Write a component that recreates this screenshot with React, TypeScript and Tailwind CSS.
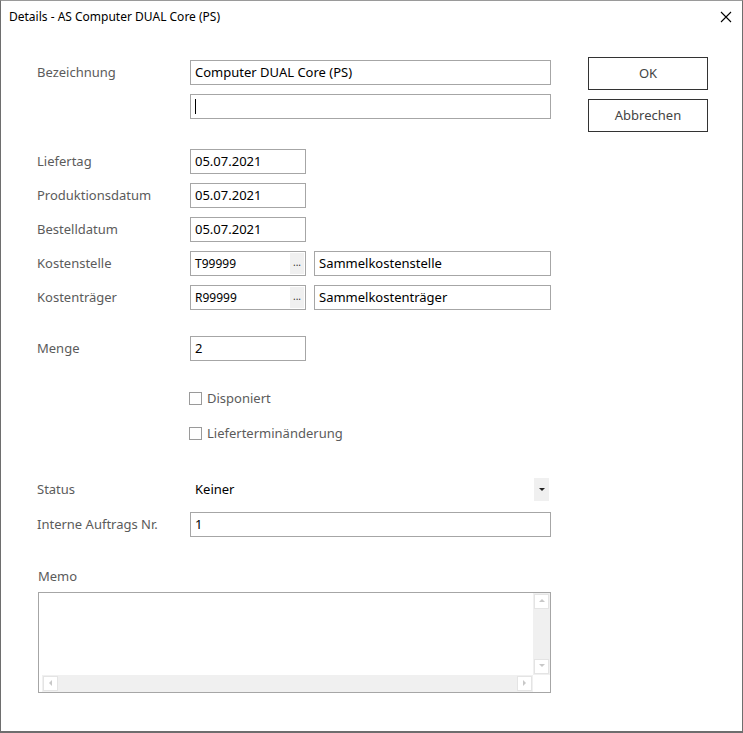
import type { ReactNode } from 'react';

const font = { fontFamily: '"Noto Sans", "Open Sans", sans-serif' };

function Label({ children }: { children: ReactNode }) {
  return <div className="w-[153px] shrink-0 text-[13px] text-[#5b5b5b]">{children}</div>;
}

function Field({ value, width, cursor }: { value?: string; width: string; cursor?: boolean }) {
  return (
    <div className={`${width} h-[25px] border border-[#a6a6a6] bg-white flex items-center pl-[4px] text-[13px] text-black`}>
      {value}
      {cursor && <span className="inline-block w-px h-[15px] bg-black" />}
    </div>
  );
}

function LookupField({ value }: { value: string }) {
  return (
    <div className="w-[116px] h-[25px] border border-[#a6a6a6] bg-white flex items-center pl-[4px] text-[12px] text-black">
      <span className="flex-1">{value}</span>
      <span className="w-[14px] h-[21px] mr-px bg-[#f0f0f0] flex items-center justify-center text-[10px] leading-none text-[#333] pb-[4px]">...</span>
    </div>
  );
}

function Checkbox({ label }: { label: string }) {
  return (
    <div className="flex items-center gap-[5px] text-[13px] text-[#5b5b5b]">
      <span className="w-[13px] h-[13px] border border-[#9a9a9a] bg-white" />
      {label}
    </div>
  );
}

function Arrow({ dir }: { dir: 'up' | 'down' | 'left' | 'right' }) {
  const pts = {
    up: '1,5 4,2 7,5',
    down: '1,2 4,5 7,2',
    left: '5,1 2,4 5,7',
    right: '2,1 5,4 2,7',
  }[dir];
  return (
    <span className="w-[15px] h-[15px] bg-white border border-[#e4e4e4] flex items-center justify-center">
      <svg width="8" height="8" viewBox="0 0 8 8">
        <polygon points={pts} fill="#c8c8c8" />
      </svg>
    </span>
  );
}

export default function App() {
  return (
    <div
      className="w-[743px] h-[733px] bg-white border-x border-t border-b-2 border-[#6e6e6e] border-t-[#9a9a9a] flex flex-col"
      style={font}
    >
      {/* Title bar */}
      <div className="h-[31px] flex items-center justify-between pl-[8px] pr-[9px] text-[12px] text-black">
        <span>Details - AS Computer DUAL Core (PS)</span>
        <svg width="12" height="12" viewBox="0 0 12 12" className="mr-[1px]">
          <path d="M1 1L11 11M11 1L1 11" stroke="#000" strokeWidth="1.1" />
        </svg>
      </div>

      <div className="flex pl-[36px]">
        {/* Form */}
        <div className="w-[515px] flex flex-col">
          <div className="flex mt-[28px]">
            <div className="w-[153px] shrink-0 h-[25px] flex items-center text-[13px] text-[#5b5b5b]">Bezeichnung</div>
            <div className="flex flex-col gap-[9px]">
              <Field value="Computer DUAL Core (PS)" width="w-[361px]" />
              <Field width="w-[361px]" cursor />
            </div>
          </div>

          <div className="flex flex-col gap-[9px] mt-[30px]">
            <div className="flex items-center"><Label>Liefertag</Label><Field value="05.07.2021" width="w-[116px]" /></div>
            <div className="flex items-center"><Label>Produktionsdatum</Label><Field value="05.07.2021" width="w-[116px]" /></div>
            <div className="flex items-center"><Label>Bestelldatum</Label><Field value="05.07.2021" width="w-[116px]" /></div>
            <div className="flex items-center">
              <Label>Kostenstelle</Label>
              <LookupField value="T99999" />
              <div className="ml-[8px]"><Field value="Sammelkostenstelle" width="w-[237px]" /></div>
            </div>
            <div className="flex items-center">
              <Label>Kostenträger</Label>
              <LookupField value="R99999" />
              <div className="ml-[8px]"><Field value="Sammelkostenträger" width="w-[237px]" /></div>
            </div>
          </div>

          <div className="flex items-center mt-[26px]"><Label>Menge</Label><Field value="2" width="w-[116px]" /></div>

          <div className="flex flex-col gap-[18px] mt-[29px] pl-[152px]">
            <div className="h-[17px] flex items-center"><Checkbox label="Disponiert" /></div>
            <div className="h-[17px] flex items-center"><Checkbox label="Lieferterminänderung" /></div>
          </div>

          <div className="flex items-center mt-[36px] h-[23px]">
            <Label>Status</Label>
            <div className="w-[359px] flex items-center justify-between pl-[5px] text-[13px] text-black">
              <span>Keiner</span>
              <span className="w-[15px] h-[23px] bg-[#f0f0f0] flex items-center justify-center">
                <svg width="6" height="4" viewBox="0 0 6 4"><polygon points="0,0 6,0 3,3" fill="#222" /></svg>
              </span>
            </div>
          </div>

          <div className="flex items-center mt-[11px]"><Label>Interne Auftrags Nr.</Label><Field value="1" width="w-[361px]" /></div>

          <div className="mt-[30px] text-[13px] text-[#5b5b5b] ml-px">Memo</div>

          <div className="mt-[5px] ml-px w-[513px] h-[101px] border border-[#a6a6a6] bg-white flex flex-col">
            <div className="flex flex-1">
              <div className="flex-1" />
              <div className="w-[17px] bg-[#f0f0f0] flex flex-col justify-between items-center pt-px pb-px">
                <Arrow dir="up" />
                <Arrow dir="down" />
              </div>
            </div>
            <div className="flex h-[17px]">
              <div className="flex-1 ml-[3px] bg-[#f0f0f0] flex items-center justify-between px-px">
                <Arrow dir="left" />
                <Arrow dir="right" />
              </div>
              <div className="w-[17px] bg-white" />
            </div>
          </div>
        </div>

        {/* Buttons */}
        <div className="ml-[36px] flex flex-col gap-[9px] mt-[25px]">
          <div className="w-[120px] h-[33px] border border-[#333] flex items-center justify-center text-[13px] text-[#444]">OK</div>
          <div className="w-[120px] h-[33px] border border-[#333] flex items-center justify-center text-[13px] text-[#444]">Abbrechen</div>
        </div>
      </div>
    </div>
  );
}
